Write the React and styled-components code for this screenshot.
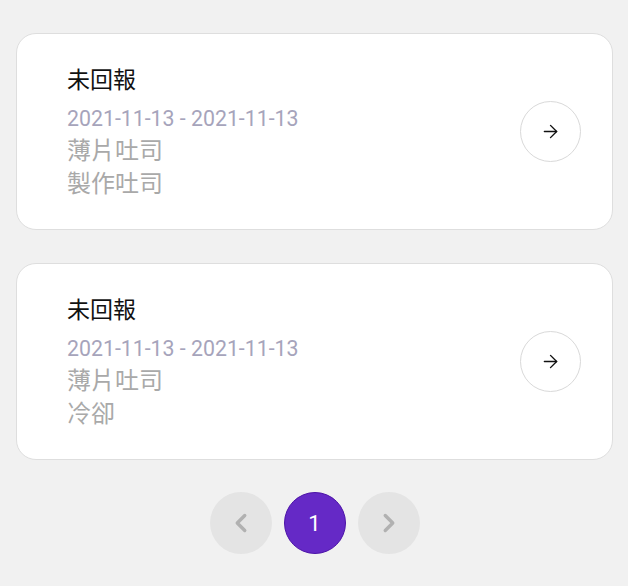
import React from 'react'
import styled, { createGlobalStyle } from 'styled-components'
import { ArrowRight, ChevronLeft, ChevronRight } from 'lucide-react'

const GlobalStyle = createGlobalStyle`
  body {
    margin: 0;
    background: #f1f1f1;
    font-family: Roboto, "Noto Sans CJK TC", sans-serif;
  }
`;

const tasks = [
  { status: '未回報', from: '2021-11-13', to: '2021-11-13', product: '薄片吐司', step: '製作吐司' },
  { status: '未回報', from: '2021-11-13', to: '2021-11-13', product: '薄片吐司', step: '冷卻' },
]

function App() {
  return (
    <>
      <GlobalStyle />
      <Page>
        {tasks.map((t, i) => (
          <Card key={i}>
            <Info>
              <Status>{t.status}</Status>
              <DateRange>{t.from} - {t.to}</DateRange>
              <Detail>{t.product}</Detail>
              <Detail>{t.step}</Detail>
            </Info>
            <GoButton type='button'>
              <ArrowRight size={21} strokeWidth={1.6} />
            </GoButton>
          </Card>
        ))}
        <Pager>
          <PageButton type='button'>
            <ChevronLeft size={30} strokeWidth={2.7} />
          </PageButton>
          <PageButton type='button' active>1</PageButton>
          <PageButton type='button'>
            <ChevronRight size={30} strokeWidth={2.7} />
          </PageButton>
        </Pager>
      </Page>
    </>
  )
}

const Page = styled.div`
  padding: 33px 15px 0 16px;
  display: flex;
  flex-direction: column;
  gap: 33px;
`;

const Card = styled.div`
  display: flex;
  align-items: center;
  justify-content: space-between;
  height: 197px;
  box-sizing: border-box;
  padding: 0 31px 0 50px;
  background: #ffffff;
  border: 1px solid #dedede;
  border-radius: 20px;
`;

const Info = styled.div`
  display: flex;
  flex-direction: column;
  padding-top: 4px;
`;

const Status = styled.div`
  font-size: 23px;
  line-height: 30px;
  color: #111;
  margin-bottom: 6px;
`;

const DateRange = styled.div`
  font-size: 21.3px;
  line-height: 33px;
  color: #a6a4bb;
`;

const Detail = styled.div`
  font-size: 24px;
  line-height: 33px;
  color: #a9a9a9;
`;

const GoButton = styled.button`
  width: 61px;
  height: 61px;
  border-radius: 50%;
  border: 1px solid #d9d9d9;
  background: #fff;
  display: flex;
  align-items: center;
  justify-content: center;
  color: #111;
  padding: 0;
`;

const Pager = styled.div`
  display: flex;
  justify-content: center;
  gap: 12px;
  margin-top: -1px;
`;

const PageButton = styled.button`
  width: 62px;
  height: 62px;
  border-radius: 50%;
  border: 1px solid ${p => (p.active ? '#4d14a8' : 'transparent')};
  background: ${p => (p.active ? '#6529c6' : '#e4e4e4')};
  color: ${p => (p.active ? '#fff' : '#b1b1b1')};
  font-family: Roboto, sans-serif;
  font-size: 22px;
  display: flex;
  align-items: center;
  justify-content: center;
  padding: 0;
`;

export default App
